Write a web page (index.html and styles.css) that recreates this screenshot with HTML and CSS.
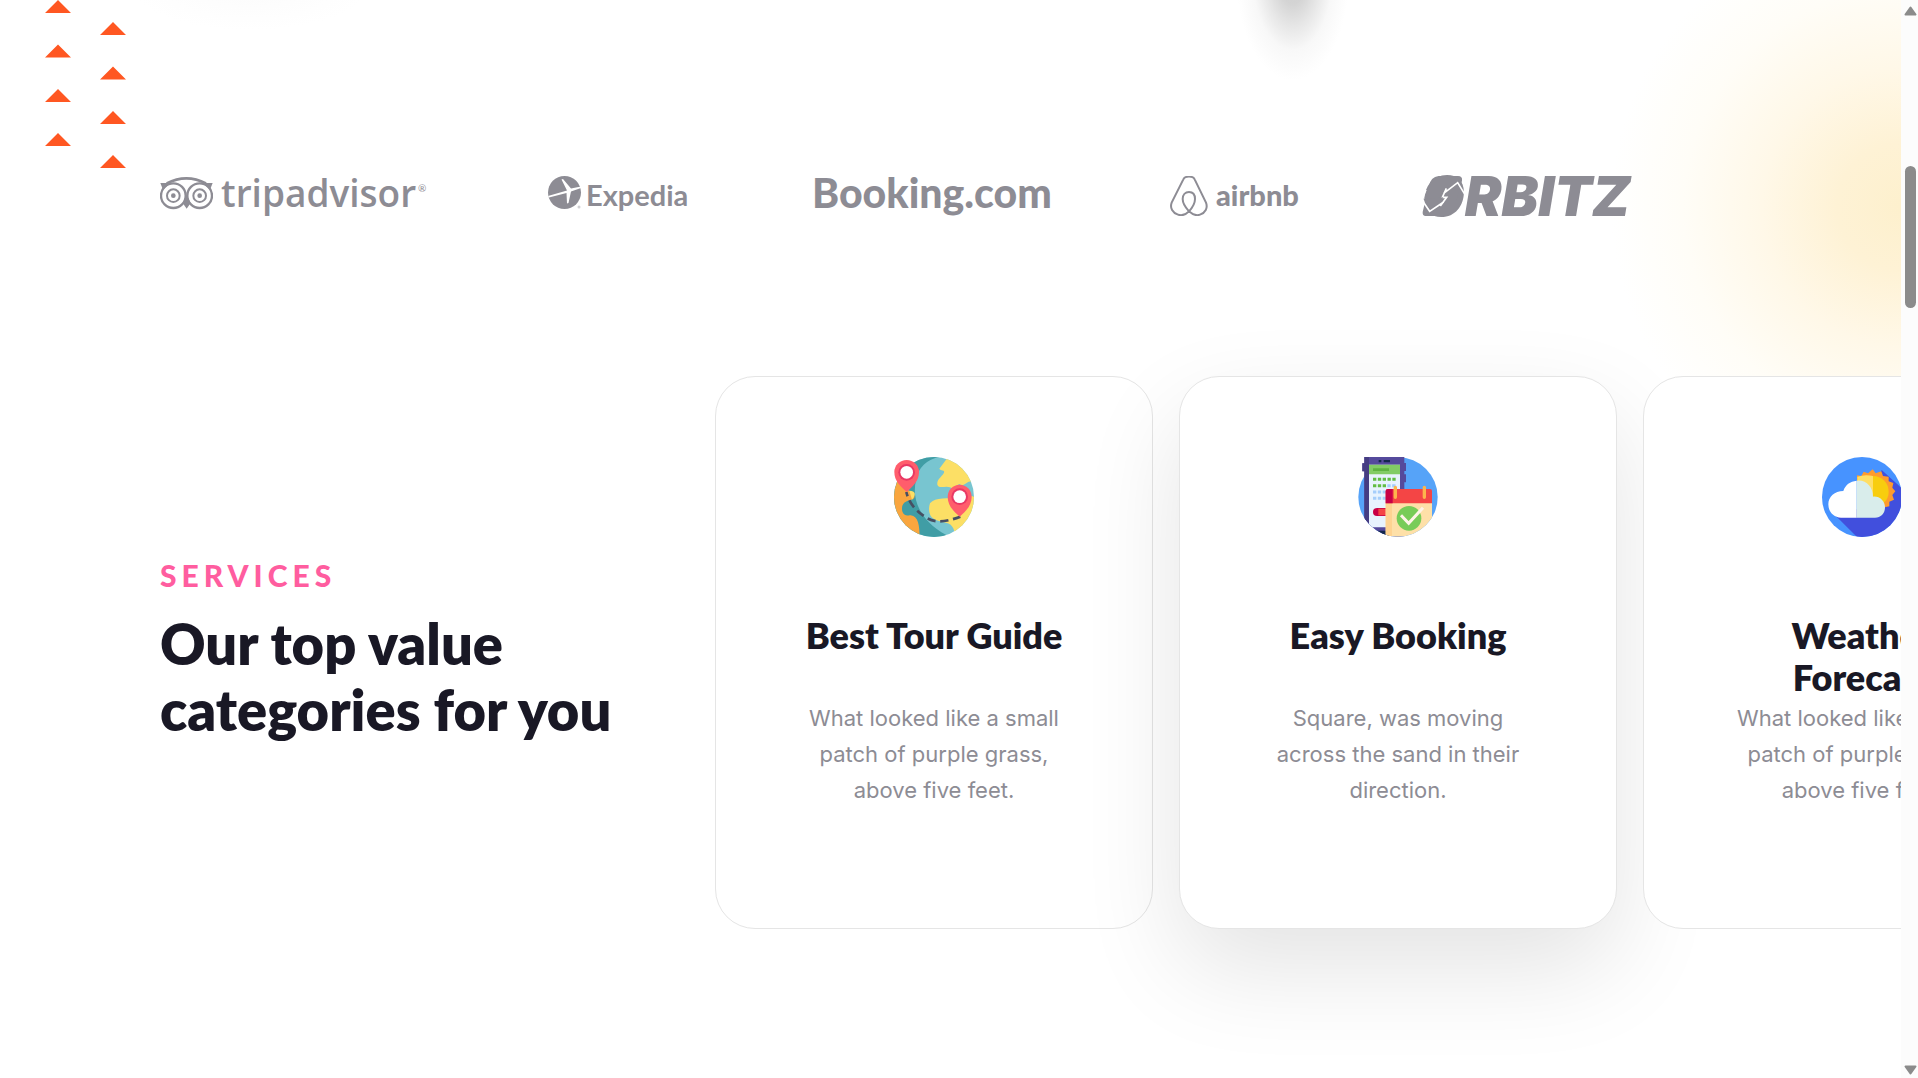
FILE: index.html
```html
<!DOCTYPE html>
<html lang="en">
<head>
<meta charset="utf-8">
<title>Services</title>
<link rel="stylesheet" href="styles.css">
</head>
<body>
<div class="page">
  <svg class="triangles" width="82" height="168" viewBox="45 0 82 168" aria-hidden="true">
    <path d="M58 0l13 13H45zM58 44.500l13 13H45zM58 89l13 13H45zM58 133l13 13H45zM113 22l13 13h-26zM113 66.500l13 13h-26zM113 111l13 13h-26zM113 155l13 13h-26z"/>
  </svg>

  <ul class="brands">
    <li class="brand brand-tripadvisor">
      <svg width="53" height="40" viewBox="480 528 159 120" aria-hidden="true">
        <g fill="none" stroke="currentColor">
          <circle cx="520" cy="587" r="37" stroke-width="7"/>
          <circle cx="599" cy="587" r="37" stroke-width="7"/>
          <circle cx="520" cy="587" r="19" stroke-width="6"/>
          <circle cx="599" cy="587" r="19" stroke-width="6"/>
          <path d="M500 550q59-30 118 0" stroke-width="8"/>
        </g>
        <circle cx="520" cy="587" r="7"/><circle cx="599" cy="587" r="7"/>
        <path d="M481 549h30l-22 20zM638 549h-30l22 20zM548 609l12 17 12-17-12-24z"/>
      </svg>
      <span class="wordmark">tripadvisor</span><span class="mark">®</span>
    </li>
    <li class="brand brand-expedia">
      <svg width="34" height="40" viewBox="0 0 34 40" aria-hidden="true">
        <circle cx="16.500" cy="16.500" r="16.500"/>
        <path d="M0 20L19 14.500 13.500 3.500 15 3l8 9.500L33 10.500v1.500l-10 3.500-2.500 11.500-1.500.5L18.500 17 1 21.500z" fill="#fff"/>
        <circle cx="31" cy="31" r="1.500" opacity=".4"/>
      </svg>
      <span class="wordmark">Expedia</span>
    </li>
    <li class="brand brand-booking"><span class="wordmark">Booking.com</span></li>
    <li class="brand brand-airbnb">
      <svg width="38" height="40" viewBox="93 78 114 120" aria-hidden="true">
        <path d="M150 184C139 172 131 159 131 147c0-13 8-21 19-21s18 8 18 21c0 12-7 25-18 37-10 10-22 14-33 10-16-5-25-20-19-36l35-70c5-11 29-11 34 0l34 70c6 16-2 31-18 36-11 4-22 0-33-10z" fill="none" stroke="currentColor" stroke-width="6"/>
      </svg>
      <span class="wordmark">airbnb</span>
    </li>
    <li class="brand brand-orbitz">
      <span class="wordmark">ORBITZ</span>
      <svg class="orbitz-arrows" width="44" height="40" viewBox="25 18 132 120" aria-hidden="true">
        <path d="M75 18h58q14 0 12 14l-22 78q-8 28-36 28H36q-10 0-9-12l18-76q6-30 30-32z"/>
        <path d="M25 90l23 34 42-28M90 70l42-32 22 36M98 55L86 82h13l-19 26" fill="none" stroke="#fff" stroke-width="5"/>
        <path d="M25 60h14l-12 32-4 6z" fill="#fff"/>
        <path d="M29 86h20l40-4-8 14-33 21z"/>
      </svg>
    </li>
  </ul>

  <section class="services" aria-labelledby="services-title">
    <header class="intro">
      <p class="eyebrow">SERVICES</p>
      <h2 class="title" id="services-title">Our top value<br>categories for you</h2>
    </header>
    <div class="cards">
      <article class="card">
        <svg class="card-icon" viewBox="102 81 240 240" aria-hidden="true">
          <defs><clipPath id="globe"><circle cx="222" cy="201" r="120"/></clipPath></defs>
          <g clip-path="url(#globe)">
            <path fill="#78c5d0" d="M102 81h240v240H102z"/>
            <path fill="#409da5" d="M102 81h138c-40 6-66 32-72 70-12 50 4 116 92 165v10h-158z"/>
            <path fill="#f9a63f" d="M102 130c14 20 24 42 48 54 18 10 18 22 0 26-14 4-24 10-24 26s10 22 26 20c24 4 26 30 27 66h-77z"/>
            <path fill="#fcdf65" d="M262 84l-24 32c4 8 18 2 14 12-8 14-22 20-20 36 6 14 24 2 38 8 10 6 16-4 28-10 16 12 18-12 44-8V81z"/>
            <path fill="#fcdf65" d="M342 200c-16-6-20 6-44 4-34 2-72-4-88 16-6 16-2 38 8 44 14 12 38 10 54 20 8 8 10 14 12 26h58z"/>
            <path fill="#fcdf65" d="M148 182q28 2 8 27z"/>
          </g>
          <path d="M139 186c8 34 28 56 58 76s66 12 104-2" fill="none" stroke="#474f63" stroke-width="8" stroke-dasharray="25 14" stroke-dashoffset="12"/>
          <path fill="#ff5d6c" d="M140 186c-20-18-37-34-37-60a37 36 0 0 1 74 0c0 26-17 42-37 60z"/>
          <circle cx="140" cy="127" r="25" fill="#e93864"/><circle cx="140" cy="127" r="19" fill="#fff"/>
          <path fill="#ff5d6c" d="M299 260c-20-18-36-34-36-60a36 36 0 0 1 72 0c0 26-16 42-36 60z"/>
          <circle cx="299" cy="200" r="25" fill="#e93864"/><circle cx="299" cy="200" r="19" fill="#fff"/>
        </svg>
        <h3 class="card-title">Best Tour Guide</h3>
        <p class="card-text">What looked like a small patch of purple grass, above five feet.</p>
      </article>
      <article class="card card-raised">
        <svg class="card-icon" viewBox="84 81 240 240" aria-hidden="true">
          <defs><clipPath id="disc"><circle cx="204" cy="201" r="119"/><rect x="96" y="81" width="132" height="75"/></clipPath></defs>
          <circle cx="204" cy="201" r="119" fill="#56a3f8"/>
          <g clip-path="url(#disc)">
            <path fill="#554a9c" d="M103 81h120v18h5v24h-5v10h5v24h-5v170H103V124h-6v-24h6z"/>
            <path fill="#453d82" d="M103 81h14v246h-14V124h-6v-24h6z"/>
            <path fill="#e8f3fe" d="M117 104h93v188h-93z"/>
            <path fill="#82cc65" d="M117 104h93v29h-93z"/>
            <path fill="#5eb341" d="M129 115h48v8h-48z"/>
            <path fill="#15284e" d="M146 90h8v7h-8zM161 90h19v7h-19zM137 302h40v24h-40z"/>
            <path stroke="#61bd43" stroke-width="9" stroke-dasharray="10 4.500" d="M129 148h69M129 167h40"/>
            <path stroke="#a5cefb" stroke-width="9" stroke-dasharray="10 4.500" d="M172 167h26M129 186h69M129 205h69"/>
            <path fill="#c80046" d="M141 234h27v24h-27a12 12 0 0 1 0-24z"/><path fill="#f44545" d="M145 236h25v20h-25z"/>
            <path fill="#fee0a8" d="M167 219h139v110H167z"/><path fill="#fed391" d="M167 219h19v110h-19z"/>
            <path fill="#f44545" d="M174 177h126q6 0 6 6v37H167v-37q0-6 7-6z"/>
            <path fill="#c80046" d="M174 177h14v43h-21v-37q0-6 7-6z"/>
            <path stroke="#fdb44c" stroke-width="10" stroke-linecap="round" d="M196 172v30M283 172v30"/>
            <circle cx="237" cy="265" r="37" fill="#78cc58"/>
          </g>
          <path d="M213 256l23 24 43-47" fill="none" stroke="#fff4e8" stroke-width="9"/>
        </svg>
        <h3 class="card-title">Easy Booking</h3>
        <p class="card-text">Square, was moving across the sand in their direction.</p>
      </article>
      <article class="card">
        <svg class="card-icon" viewBox="129 81 240 240" aria-hidden="true">
          <defs><clipPath id="sky"><circle cx="249" cy="201" r="120"/></clipPath></defs>
          <g clip-path="url(#sky)">
            <path fill="#4793ff" d="M129 81h240v240H129z"/>
            <path fill="#414fdd" d="M308 120l61 55v146H234l-70-70 100-20z"/>
            <path fill="#fe9b2d" d="M234 136l13 2 7-13 13 5 14-12 9 12 17-6 5 14 17 2v14l14 5-3 14 9 11-9 11 5 14-14 6v14l-14 3-30 10-53-80z"/>
            <circle cx="282" cy="185" r="47" fill="#f8cd0e"/>
            <path fill="#ffde64" d="M235 140q24-8 47-2v70h-47z"/>
            <path fill="#fff" d="M233 152c-20 2-34 12-40 31-26 0-45 17-45 40s16 39 38 40h47z"/>
            <path fill="#d9edeb" d="M233 152c28-4 49 18 49 48 20-2 36 13 36 32 0 18-12 31-30 31h-55z"/>
          </g>
        </svg>
        <h3 class="card-title">Weather Forecast</h3>
        <p class="card-text">What looked like a small patch of purple grass, above five feet.</p>
      </article>
    </div>
  </section>
</div>

<div class="scrollbar" aria-hidden="true">
  <svg width="13" height="10" viewBox="0 0 13 10"><path d="M6.500 1.500L11.500 8.500h-10z"/></svg>
  <span class="thumb"></span>
  <svg class="arrow-down" width="13" height="10" viewBox="0 0 13 10"><path d="M6.500 8.500L1.500 1.500h10z"/></svg>
</div>
</body>
</html>
```
FILE: styles.css
```css
* {
  box-sizing: border-box;
}

body {
  display: flex;
  height: 100vh;
  margin: 0;
  overflow: hidden;
  background: #fff;
  color: #191825;
  font-family: Lato, "Liberation Sans", sans-serif;
}

h2, h3, p, ul {
  margin: 0;
  padding: 0;
}

.page {
  position: relative;
  flex: 1;
  min-width: 0;
  padding: 176px 0 0 160px;
  overflow: hidden;
  background:
    radial-gradient(ellipse 56px 100px at 68% -20px, #cecece 0%, #d4d4d4 24%, #e6e6e6 46%, #f8f8f8 70%, transparent 100%),
    radial-gradient(ellipse 120px 44px at 250px -14px, #fbfbfb, transparent),
    radial-gradient(circle 290px at 100% 207px, #fdf0cd 0%, #fef2d5 22%, #fff8e8 48%, #fffdf7 75%, transparent 100%),
    #fff;
}

.triangles {
  position: absolute;
  top: 0;
  left: 45px;
  fill: #ff5722;
}

.brands {
  display: flex;
  gap: 122px;
  list-style: none;
}

.brand {
  position: relative;
  display: flex;
  height: 40px;
  color: #8d8c94;
  line-height: 38px;
  white-space: nowrap;
}

.brand svg {
  flex: none;
  fill: currentColor;
}

.brand-tripadvisor {
  gap: 8px;
  width: 266px;
}

.brand-tripadvisor .wordmark {
  font: 600 37px/34px "Open Sans", sans-serif;
}

.mark {
  margin-left: -6px;
  font-size: 10px;
  line-height: 24px;
}

.brand-expedia {
  gap: 4px;
  width: 142px;
}

.brand-expedia .wordmark {
  font-size: 29px;
  font-weight: 700;
}

.brand-booking {
  width: 236px;
}

.brand-booking .wordmark {
  font-size: 41px;
  font-weight: 900;
  line-height: 34px;
}

.brand-airbnb {
  gap: 8px;
  width: 130px;
}

.brand-airbnb .wordmark {
  font-size: 29px;
  font-weight: 900;
}

.brand-orbitz .wordmark {
  font: italic 900 55px/40px Inter, sans-serif;
}

.orbitz-arrows {
  position: absolute;
  top: 0;
  left: 0;
}

.services {
  display: flex;
  align-items: center;
  margin-top: 160px;
}

.intro {
  flex: 0 0 555px;
  padding-bottom: 6px;
}

.eyebrow {
  margin-bottom: 18px;
  color: #ff5d9f;
  font-size: 30px;
  font-weight: 900;
  line-height: 36px;
  letter-spacing: 5px;
}

.title {
  font-size: 56px;
  font-weight: 800;
  line-height: 66px;
}

.cards {
  display: flex;
  flex: 1;
  gap: 26px;
  min-width: 0;
}

.card {
  display: flex;
  flex: 0 0 438px;
  flex-direction: column;
  align-items: center;
  padding: 80px 80px 120px;
  border: 1px solid #e5e5e5;
  border-radius: 40px;
  background: #fff;
  text-align: center;
}

.card-raised {
  box-shadow: 0 40px 100px rgba(0, 0, 0, 0.11);
}

.card-icon {
  width: 80px;
  height: 80px;
  margin-bottom: 77px;
}

.card-title {
  min-height: 86px;
  font-size: 36px;
  font-weight: 800;
  line-height: 42px;
}

.card-text {
  color: #8d8c94;
  font: 400 22px/36px Inter, sans-serif;
}

.scrollbar {
  display: flex;
  flex: 0 0 17px;
  flex-direction: column;
  align-items: center;
  padding: 6px 1px 3px 2px;
  background: #fcfcfc;
}

.scrollbar svg {
  flex: none;
  fill: #8b8b8b;
  stroke: #8b8b8b;
  stroke-width: 2;
  stroke-linejoin: round;
}

.thumb {
  width: 11px;
  height: 142px;
  margin-top: 150px;
  border-radius: 6px;
  background: #8b8b8b;
}

.arrow-down {
  margin-top: auto;
}
```
